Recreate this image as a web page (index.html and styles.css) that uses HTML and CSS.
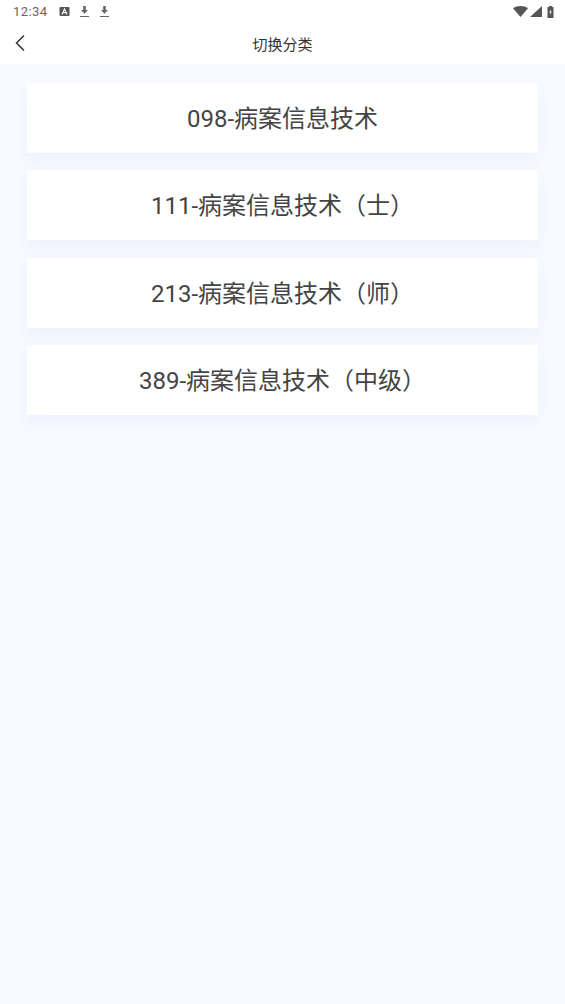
FILE: index.html
```html
<!DOCTYPE html>
<html lang="zh-CN">
<head>
    <meta charset="UTF-8">
    <meta name="viewport" content="width=device-width, initial-scale=1.0">
    <title>切换分类</title>
    <link rel="stylesheet" href="styles.css">
</head>
<body>

    <div class="header">
        <div class="status-bar">
            <span class="time">12:34</span>
            <svg class="status-icon first" width="11" height="11" viewBox="0 0 11 11">
                <rect x="0.5" y="1" width="10" height="9" rx="1" fill="#555"/>
                <path d="M3 8.5 L5.5 2.8 L8 8.5 M4 6.6 H7" fill="none" stroke="#fff" stroke-width="1.1"/>
            </svg>
            <svg class="status-icon" width="11" height="13" viewBox="0 0 11 13">
                <path d="M4.2 1 H6.8 V5 H9 L5.5 8.8 L2 5 H4.2 Z M1 11 H10 V12 H1 Z" fill="#666"/>
            </svg>
            <svg class="status-icon" width="11" height="13" viewBox="0 0 11 13">
                <path d="M4.2 1 H6.8 V5 H9 L5.5 8.8 L2 5 H4.2 Z M1 11 H10 V12 H1 Z" fill="#666"/>
            </svg>
            <div class="status-right">
                <svg width="15" height="11" viewBox="0 0 15 11">
                    <path d="M0 2.2 C4 -0.7 11 -0.7 15 2.2 L7.5 11 Z" fill="#555"/>
                </svg>
                <svg width="12" height="11" viewBox="0 0 12 11">
                    <path d="M12 0 V11 H0 Z" fill="#555"/>
                </svg>
                <svg class="battery" width="7" height="12" viewBox="0 0 7 12">
                    <path d="M2 0 H5 V1 H6.5 V12 H0.5 V1 H2 Z" fill="#555"/>
                    <path d="M4 3 L2.3 6.6 H3.5 L3 9.4 L4.8 5.6 H3.6 Z" fill="#fff"/>
                </svg>
            </div>
        </div>
        <div class="nav-bar">
            <svg class="back" width="12" height="18" viewBox="0 0 12 18">
                <path d="M10 1.5 L2.5 9 L10 16.5" fill="none" stroke="#333" stroke-width="1.5"/>
            </svg>
            <span class="nav-title">切换分类</span>
        </div>
    </div>

    <div class="list">
        <div class="card">098-病案信息技术</div>
        <div class="card">111-病案信息技术（士）</div>
        <div class="card">213-病案信息技术（师）</div>
        <div class="card">389-病案信息技术（中级）</div>
    </div>

</body>
</html>
```

FILE: styles.css
```css
html, body {
    height: 100%;
}

body {
    margin: 0;
    background-color: #f8faff;
    font-family: Roboto, "Noto Sans CJK SC", sans-serif;
    overflow: hidden;
}

.header {
    background-color: white;
}

.status-bar {
    display: flex;
    align-items: center;
    height: 23px;
    padding: 0 13px;
}

.time {
    font-size: 13px;
    letter-spacing: 0.4px;
    color: #666;
    margin-right: 1px;
}

.status-icon {
    margin-left: 9px;
}

.status-icon.first {
    margin-left: 11px;
}

.status-right {
    display: flex;
    align-items: center;
    gap: 2px;
    margin-left: auto;
    margin-right: -2px;
}

.battery {
    margin-left: 3px;
}

.nav-bar {
    position: relative;
    display: flex;
    justify-content: center;
    align-items: center;
    height: 41px;
}

.back {
    position: absolute;
    left: 14px;
    top: 11px;
}

.nav-title {
    font-size: 15px;
    color: #333;
}

.list {
    display: flex;
    flex-direction: column;
    gap: 17.8px;
    padding: 19px 27px 0;
}

.card {
    display: flex;
    justify-content: center;
    align-items: center;
    height: 69.7px;
    padding-bottom: 3px;
    box-sizing: border-box;
    background-color: white;
    box-shadow: 0 6px 14px rgba(210, 225, 250, 0.35);
    font-size: 24px;
    color: #444;
}
```
